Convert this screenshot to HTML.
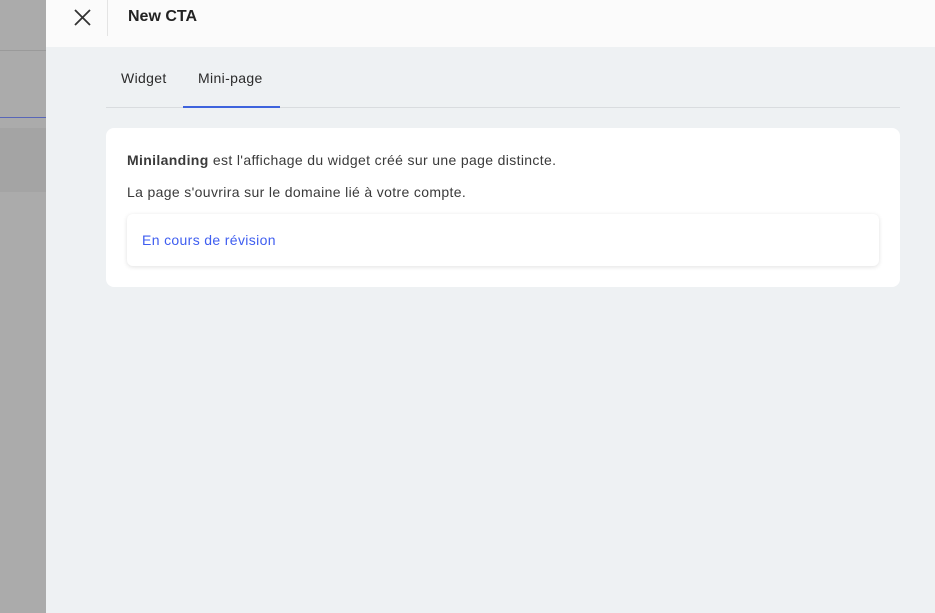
<!DOCTYPE html><html><head><style>
body{margin:0;width:935px;height:613px;overflow:hidden;font-family:"Liberation Sans",sans-serif;position:relative;background:#eef1f3}
.l{position:absolute;left:0;top:0;width:46px;height:613px;background:#ababab}
.hd{position:absolute;left:46px;top:0;right:0;height:47px;background:#fbfbfb}
.t{position:absolute;font-size:14px;color:#2b2b2b;letter-spacing:0.35px;white-space:nowrap}
</style></head><body>
<div class="l">
<div style="position:absolute;top:50px;width:46px;height:1px;background:#9a9a9a"></div>
<div style="position:absolute;top:117px;width:46px;height:1px;background:#5866b8"></div>
<div style="position:absolute;top:128px;width:46px;height:64px;background:#a4a4a4"></div>
</div>
<div class="hd">
<svg style="position:absolute;left:28px;top:9px" width="17" height="17" viewBox="0 0 17 17"><path d="M1 1L16 16M16 1L1 16" stroke="#333" stroke-width="1.8"/></svg>
<div style="position:absolute;left:61px;top:0;width:1px;height:36px;background:#e4e4e4"></div>
<div class="t" style="left:82px;top:8px;font-size:16px;color:#222;font-weight:bold;letter-spacing:0">New CTA</div>
</div>
<div class="t" style="left:121px;top:70px">Widget</div>
<div class="t" style="left:198px;top:70px">Mini-page</div>
<div style="position:absolute;left:106px;top:107px;width:794px;height:1px;background:#d9dcdf"></div>
<div style="position:absolute;left:183px;top:106px;width:97px;height:2px;background:#3e63dd"></div>
<div style="position:absolute;left:106px;top:128px;width:794px;height:159px;background:#fff;border-radius:8px"></div>
<div class="t" style="left:127px;top:152px;color:#3a3a3a"><b>Minilanding</b> est l'affichage du widget créé sur une page distincte.</div>
<div class="t" style="left:127px;top:184px;color:#3a3a3a">La page s'ouvrira sur le domaine lié à votre compte.</div>
<div style="position:absolute;left:127px;top:214px;width:752px;height:52px;background:#fff;border-radius:6px;box-shadow:0 1px 5px rgba(0,0,0,.12)"></div>
<div class="t" style="left:142px;top:232px;color:#3f5ef0">En cours de révision</div>
</body></html>
